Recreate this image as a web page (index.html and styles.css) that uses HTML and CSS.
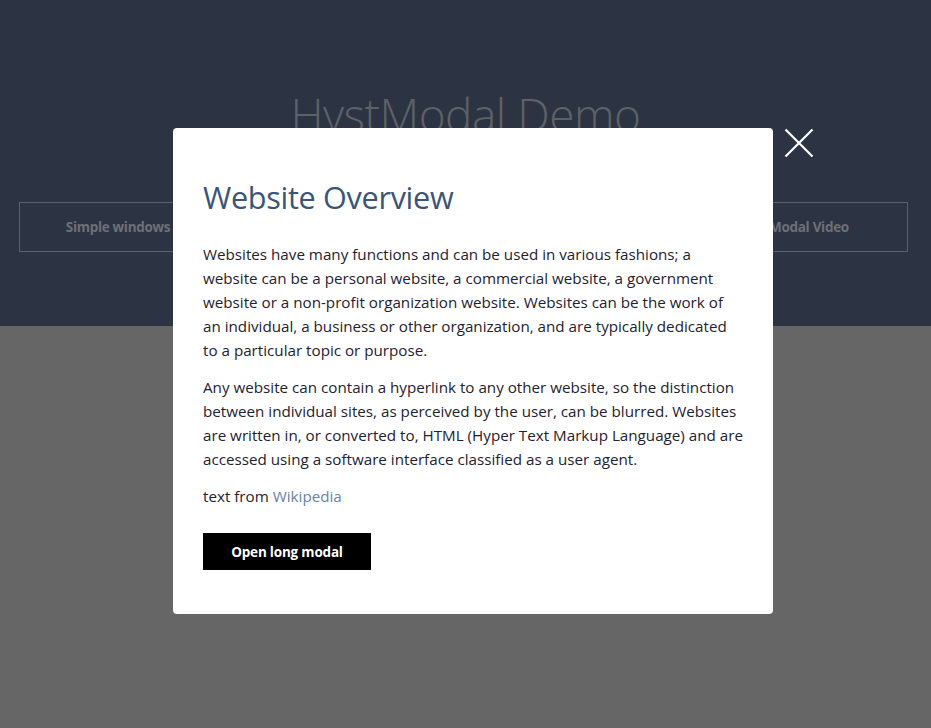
FILE: index.html
```html
<!DOCTYPE html>
<html lang="en">
<head>
<meta charset="utf-8">
<title>HystModal Demo</title>
<link rel="stylesheet" href="styles.css">
</head>
<body>
<header class="hero">
  <h1 class="hero-title">HystModal Demo</h1>
  <div class="hero-buttons">
    <button class="hero-btn">Simple windows</button>
    <button class="hero-btn">Long modal</button>
    <button class="hero-btn">Custom style</button>
    <button class="hero-btn">Modal Video</button>
  </div>
</header>
<main class="page"></main>

<div class="overlay">
  <div class="modal">
    <button class="modal-close" aria-label="Close">
      <svg width="30" height="30" viewBox="0 0 30 30"><path d="M1.5 1.5 L28.5 28.5 M28.5 1.5 L1.5 28.5" stroke="#fff" stroke-width="2.2" fill="none"/></svg>
    </button>
    <h2 class="modal-title">Website Overview</h2>
    <p class="modal-text">Websites have many functions and can be used in various fashions; a website can be a personal website, a commercial website, a government website or a non-profit organization website. Websites can be the work of an individual, a business or other organization, and are typically dedicated to a particular topic or purpose.</p>
    <p class="modal-text">Any website can contain a hyperlink to any other website, so the distinction between individual sites, as perceived by the user, can be blurred. Websites are written in, or converted to, HTML (Hyper Text Markup Language) and are accessed using a software interface classified as a user agent.</p>
    <p class="modal-text">text from <a class="modal-link" href="#">Wikipedia</a></p>
    <button class="modal-btn">Open long modal</button>
  </div>
</div>
</body>
</html>
```

FILE: styles.css
```css
html, body {
  margin: 0;
  padding: 0;
}
body {
  background: #666666;
  font-family: "Open Sans", "Noto Sans", sans-serif;
  height: 728px;
  overflow: hidden;
}
.hero {
  background: #2c3443;
  height: 326px;
  box-sizing: border-box;
  padding-top: 86px;
}
.hero-title {
  margin: 0;
  text-align: center;
  font-family: "Open Sans", sans-serif;
  font-weight: 300;
  font-size: 46px;
  line-height: 56px;
  color: #5e6166;
  letter-spacing: -0.5px;
}
.hero-buttons {
  display: flex;
  justify-content: space-between;
  padding: 60px 23px 0 19px;
}
.hero-btn {
  width: 198px;
  height: 50px;
  background: transparent;
  border: 1px solid #5c6068;
  color: #6d7076;
  font-family: "Open Sans", sans-serif;
  font-weight: 700;
  font-size: 13.5px;
  letter-spacing: -0.3px;
}
.overlay {
  position: fixed;
  inset: 0;
  display: flex;
  align-items: flex-start;
  padding: 128px 0 0 173px;
}
.modal {
  position: relative;
  width: 600px;
  box-sizing: border-box;
  background: #fff;
  border-radius: 4px;
  padding: 48px 30px 44px 30px;
}
.modal-close {
  position: absolute;
  top: 0;
  right: -41px;
  width: 30px;
  height: 30px;
  padding: 0;
  border: 0;
  background: transparent;
}
.modal-close svg {
  display: block;
}
.modal-title {
  margin: 0 0 24px;
  font-family: "Open Sans", sans-serif;
  font-weight: 400;
  font-size: 30.6px;
  line-height: 42px;
  color: #3b5578;
  letter-spacing: -0.3px;
}
.modal-text {
  margin: 0 0 13px;
  font-size: 15.2px;
  line-height: 24px;
  color: #1f2230;
}
.modal-link {
  color: #6b82a8;
  text-decoration: none;
}
.modal-btn {
  margin-top: 25px;
  width: 168px;
  height: 37px;
  border: 0;
  background: #000;
  color: #fff;
  font-family: "Open Sans", sans-serif;
  font-weight: 700;
  font-size: 13.5px;
  letter-spacing: -0.2px;
  display: block;
}
```
